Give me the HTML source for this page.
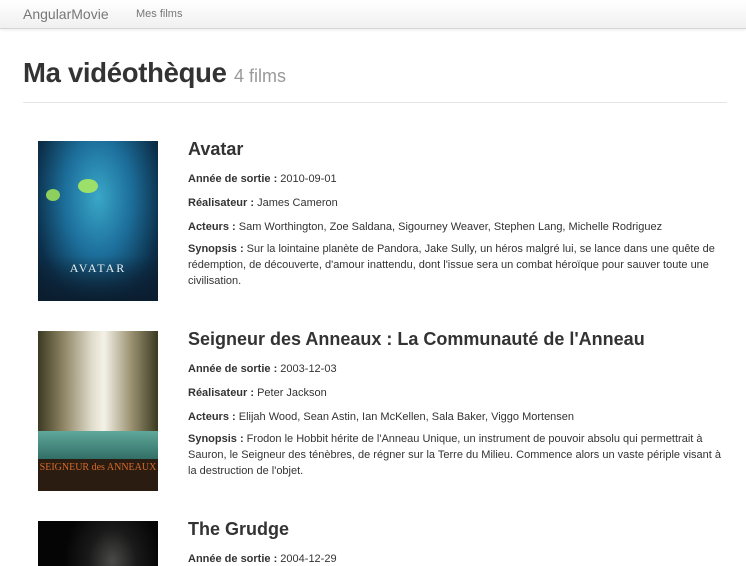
<!DOCTYPE html>
<html><head><meta charset="utf-8"><style>
*{margin:0;padding:0;box-sizing:border-box}
html,body{width:746px;height:566px;overflow:hidden}
body{background:#fff;font-family:"Liberation Sans",Helvetica,Arial,sans-serif;color:#333;font-size:11px;position:relative}
.nav{height:29px;background:linear-gradient(#fff,#f0f0f0);border-bottom:1px solid #d4d4d4;box-shadow:0 1px 3px rgba(0,0,0,.08);position:relative}
.brand{position:absolute;left:23px;top:6px;font-size:14px;color:#777}
.link{position:absolute;left:136px;top:8px;font-size:11px;color:#777}
h1{position:absolute;left:23px;top:57px;font-size:27.5px;font-weight:bold;color:#333;letter-spacing:-0.3px}
h1 small{font-size:18px;font-weight:normal;color:#999;letter-spacing:0}
.hr{position:absolute;left:23px;top:102px;width:704px;border-top:1px solid #e5e5e5}
.poster{position:absolute;left:38px;width:120px;height:160px}
.m{position:absolute;left:188px;width:540px}
.m h2{font-size:18px;font-weight:bold;color:#333;height:22px;margin-bottom:11px;line-height:22px}
.m p{line-height:16px;margin-bottom:8px}
.m p.a{margin-bottom:6px}
.m b{color:#333}
</style></head><body>
<div class="nav"><span class="brand">AngularMovie</span><span class="link">Mes films</span></div>
<h1>Ma vidéothèque <small>4 films</small></h1>
<div class="hr"></div>

<div class="poster" style="top:141px;background:radial-gradient(ellipse at 50% 35%,#3aa7c8 0%,#1c6e9a 40%,#0c2f4a 75%,#0a1a2a 100%)">
<div style="position:absolute;left:40px;top:38px;width:20px;height:14px;border-radius:50%;background:#9ce06a"></div>
<div style="position:absolute;left:8px;top:48px;width:14px;height:12px;border-radius:50%;background:#8ed05e"></div>
<div style="position:absolute;left:0;bottom:0;width:120px;height:45px;background:linear-gradient(transparent,#0b1e30)"></div>
<div style="position:absolute;left:0;width:120px;top:120px;text-align:center;color:#e8eef2;font-family:'Liberation Serif',serif;font-size:12px;letter-spacing:2px">AVATAR</div>
</div>
<div class="m" style="top:138px">
<h2>Avatar</h2>
<p><b>Année de sortie :</b> 2010-09-01</p>
<p><b>Réalisateur :</b> James Cameron</p>
<p class="a"><b>Acteurs :</b> Sam Worthington, Zoe Saldana, Sigourney Weaver, Stephen Lang, Michelle Rodriguez</p>
<p><b>Synopsis :</b> Sur la lointaine planète de Pandora, Jake Sully, un héros malgré lui, se lance dans une quête de<br>rédemption, de découverte, d'amour inattendu, dont l'issue sera un combat héroïque pour sauver toute une<br>civilisation.</p>
</div>

<div class="poster" style="top:331px;background:linear-gradient(90deg,#3b3a22 0%,#8a8060 20%,#e0dccb 45%,#f4f2e8 55%,#9a9070 78%,#3a3a20 100%)">
<div style="position:absolute;left:0;top:100px;width:120px;height:30px;background:linear-gradient(#5fa89a,#2f6a62)"></div>
<div style="position:absolute;left:0;top:128px;width:120px;height:32px;background:#2a1c10"></div>
<div style="position:absolute;left:0;width:120px;top:131px;text-align:center;color:#d86a2a;font-family:'Liberation Serif',serif;font-size:10px">SEIGNEUR des ANNEAUX</div>
</div>
<div class="m" style="top:328px">
<h2>Seigneur des Anneaux : La Communauté de l'Anneau</h2>
<p><b>Année de sortie :</b> 2003-12-03</p>
<p><b>Réalisateur :</b> Peter Jackson</p>
<p class="a"><b>Acteurs :</b> Elijah Wood, Sean Astin, Ian McKellen, Sala Baker, Viggo Mortensen</p>
<p><b>Synopsis :</b> Frodon le Hobbit hérite de l'Anneau Unique, un instrument de pouvoir absolu qui permettrait à<br>Sauron, le Seigneur des ténèbres, de régner sur la Terre du Milieu. Commence alors un vaste périple visant à<br>la destruction de l'objet.</p>
</div>

<div class="poster" style="top:521px;height:45px;background:radial-gradient(ellipse 60px 80px at 62% 90%,#4a4a48 0%,#1a1a1a 40%,#050505 80%)"></div>
<div class="m" style="top:518px">
<h2>The Grudge</h2>
<p><b>Année de sortie :</b> 2004-12-29</p>
</div>
</body></html>
